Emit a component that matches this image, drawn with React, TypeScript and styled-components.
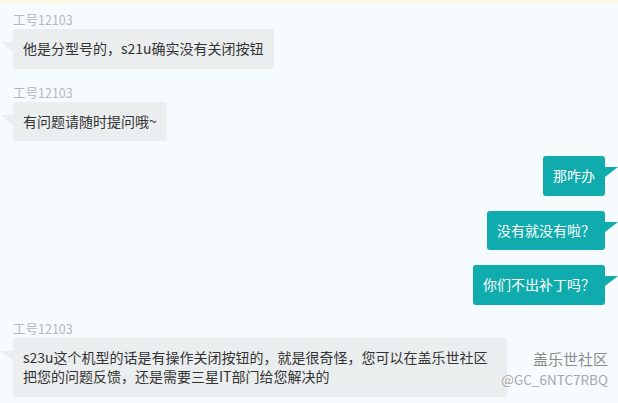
import React from 'react';
import styled, { createGlobalStyle } from 'styled-components';

const GlobalStyle = createGlobalStyle`
  html, body {
    margin: 0;
    padding: 0;
    background: #f6fbfe;
  }
  body {
    font-family: "Noto Sans CJK SC", "Noto Sans", sans-serif;
  }
`;

interface Message {
  from: 'agent' | 'me';
  author?: string;
  text: string;
}

const messages: Message[] = [
  { from: 'agent', author: '工号12103', text: '他是分型号的，s21u确实没有关闭按钮' },
  { from: 'agent', author: '工号12103', text: '有问题请随时提问哦~' },
  { from: 'me', text: '那咋办' },
  { from: 'me', text: '没有就没有啦？' },
  { from: 'me', text: '你们不出补丁吗？' },
  {
    from: 'agent',
    author: '工号12103',
    text: 's23u这个机型的话是有操作关闭按钮的，就是很奇怪，您可以在盖乐世社区把您的问题反馈，还是需要三星IT部门给您解决的',
  },
];

export default function App() {
  return (
    <>
      <GlobalStyle />
      <Page>
        <TopBand />
        <Thread>
          {messages.map((m, i) => (
            <Row key={i} $side={m.from}>
              {m.author && <Author>{m.author}</Author>}
              <Bubble $side={m.from}>{m.text}</Bubble>
            </Row>
          ))}
        </Thread>
        <Watermark>
          <span className="watermark__title">盖乐世社区</span>
          <span className="watermark__user">@GC_6NTC7RBQ</span>
        </Watermark>
      </Page>
    </>
  );
}

const Page = styled.div`
  position: relative;
  width: 618px;
  height: 403px;
  overflow: hidden;
  background: #f6fbfe;
`;

const TopBand = styled.div`
  height: 3px;
  background: #fcf6df;
`;

const Thread = styled.div`
  display: flex;
  flex-direction: column;
  gap: 15px;
  padding: 8px 13px 0;
`;

const Row = styled.div<{ $side: 'agent' | 'me' }>`
  display: flex;
  flex-direction: column;
  align-items: ${(p) => (p.$side === 'me' ? 'flex-end' : 'flex-start')};
`;

const Author = styled.div`
  font-size: 12.5px;
  line-height: 17px;
  color: #b5b8ba;
  margin-bottom: 1px;
`;

const Bubble = styled.div<{ $side: 'agent' | 'me' }>`
  position: relative;
  box-sizing: border-box;
  max-width: 494px;
  padding: 10px 10px;
  font-size: 14px;
  line-height: 19.5px;
  border-radius: 3px;
  color: ${(p) => (p.$side === 'me' ? '#ffffff' : '#333333')};
  background: ${(p) => (p.$side === 'me' ? '#0fabad' : '#ebeeef')};

  &::before {
    content: '';
    position: absolute;
    top: 13px;
    width: 0;
    height: 0;
    border-top: 10px solid ${(p) => (p.$side === 'me' ? '#0fabad' : '#ebeeef')};
    ${(p) =>
      p.$side === 'me'
        ? `right: -13px; border-right: 13px solid transparent; top: 11px;`
        : `left: -12px; border-left: 12px solid transparent;`}
  }
`;

const Watermark = styled.div`
  position: absolute;
  right: 10px;
  bottom: 14px;
  display: flex;
  flex-direction: column;
  align-items: flex-end;
  line-height: 20px;

  .watermark__title {
    font-size: 15px;
    color: #8c8c8c;
  }

  .watermark__user {
    font-size: 13.5px;
    color: #a8a8a8;
  }
`;
